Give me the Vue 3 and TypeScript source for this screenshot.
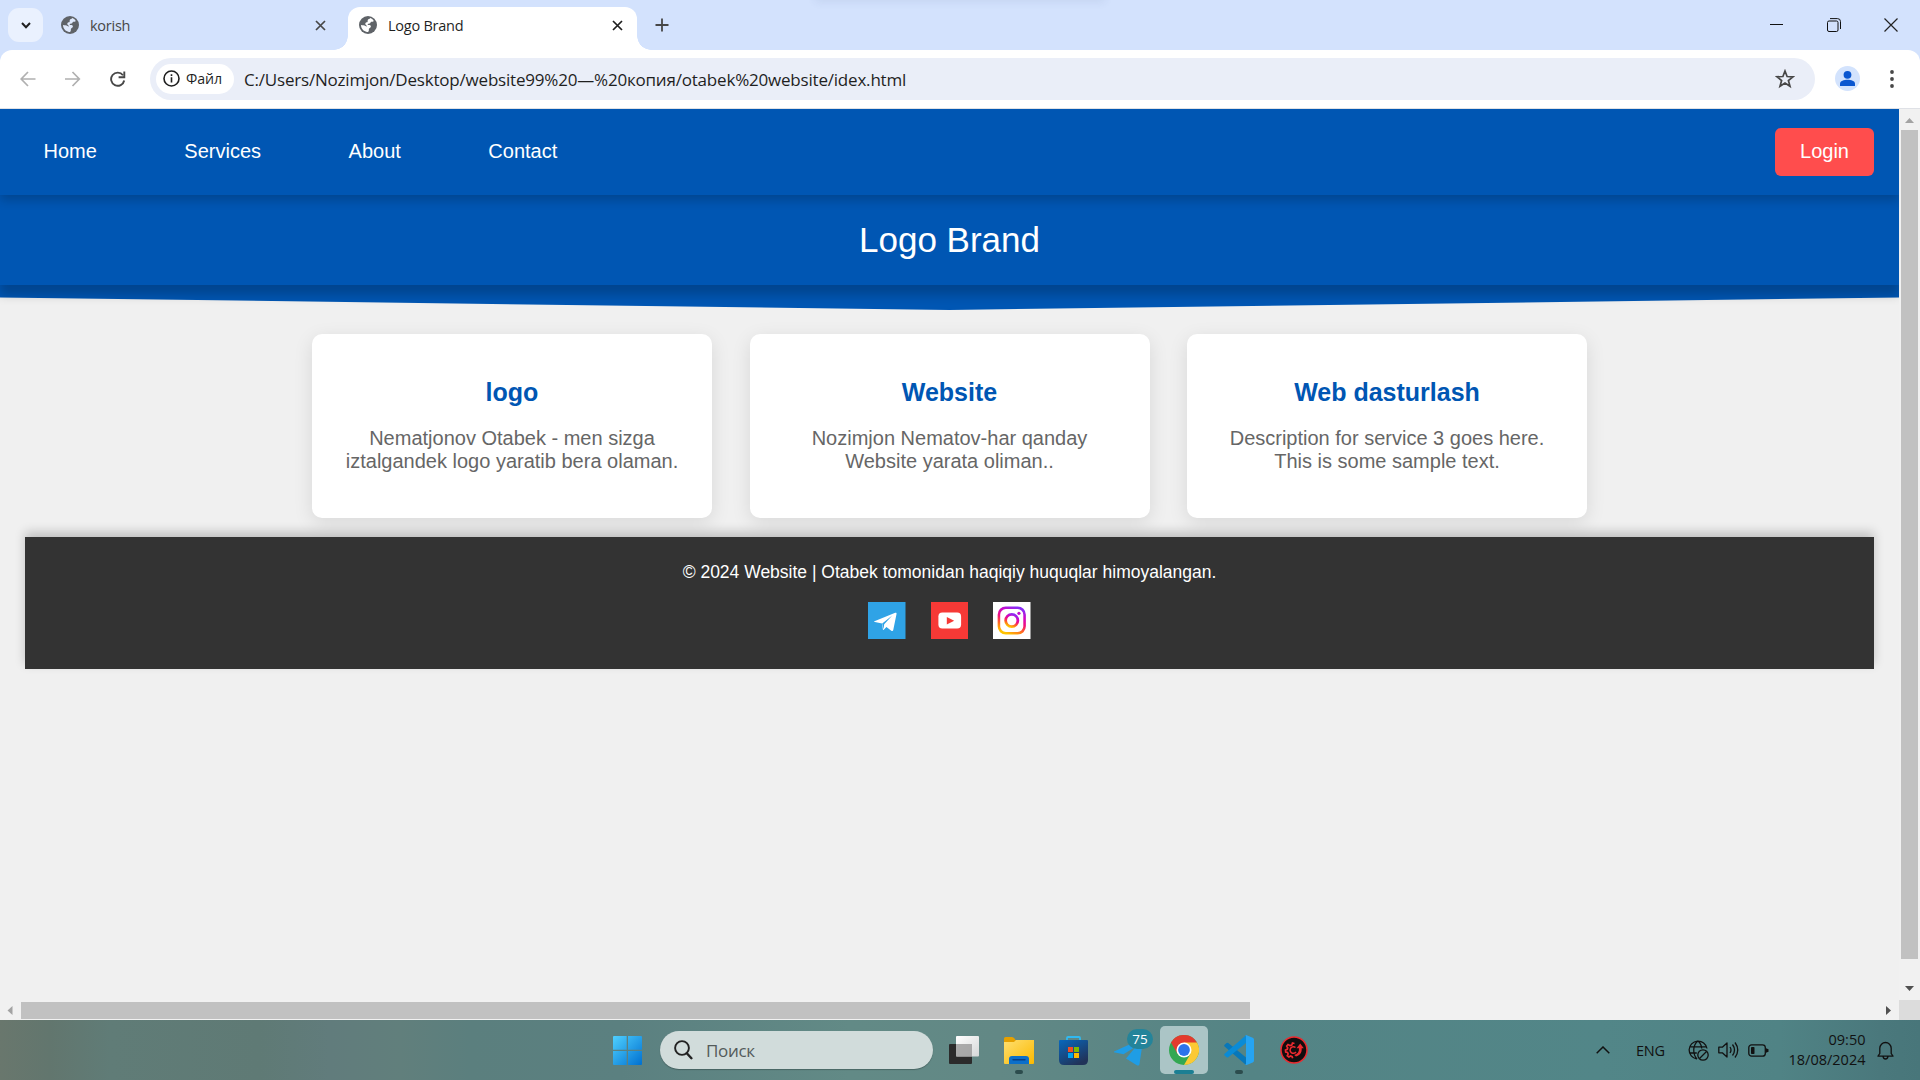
<script setup lang="ts">
interface Tab { title: string; active: boolean }
interface Card { title: string; lines: string[] }

const tabs: Tab[] = [
  { title: 'korish', active: false },
  { title: 'Logo Brand', active: true },
]
const links: string[] = ['Home', 'Services', 'About', 'Contact']
const cards: Card[] = [
  { title: 'logo', lines: ['Nematjonov Otabek - men sizga', 'iztalgandek logo yaratib bera olaman.'] },
  { title: 'Website', lines: ['Nozimjon Nematov-har qanday', 'Website yarata oliman..'] },
  { title: 'Web dasturlash', lines: ['Description for service 3 goes here.', 'This is some sample text.'] },
]
</script>

<template>
  <div class="screen">
    <div class="tabstrip">
      <button class="tab-search">
        <svg width="10" height="7" viewBox="0 0 10 7"><path d="M1 1l4 4.2L9 1" fill="none" stroke="#1f1f1f" stroke-width="2" /></svg>
      </button>
      <div v-for="tab in tabs" :key="tab.title" class="tab" :class="{ active: tab.active }">
        <svg class="globe" width="18" height="18" viewBox="0 0 18 18">
          <circle cx="9" cy="9" r="9" fill="#5f6368" />
          <path d="M11.200 2.100c1.500.5 2.800 1.500 3.600 2.800-.8.900-1.800.600-2.600.9-.7.300-.5 1.200-1.300 1.600-.8.300-1.600-.1-2.100.5-.4.600.2 1.100.9 1.100 1.200 0 2.200.4 2.200 1.500 0 1.200-1.500 1.400-1.900 2.300-.4 1 .2 1.800-.5 2.600-.4.500-1 .7-1.600.6C4.500 15.500 2 12.600 2 9.100c1.600.2 3.400.4 4.500 1 .5.300.9.600 1.300.3.300-.4-.5-.9-.9-1.300-.6-.7-.9-1.600-.2-2.300.6-.6 1.500-.4 1.900-1.100.3-.6-.2-1.200.3-1.900.5-.6 1.700-.6 2.300-1.700z" :fill="tab.active ? '#fff' : '#dfe9fc'" />
        </svg>
        <span class="tab-title">{{ tab.title }}</span>
        <svg class="tab-close" width="11" height="11" viewBox="0 0 11 11"><path d="M1 1l9 9M10 1l-9 9" :stroke="tab.active ? '#1f1f1f' : '#474747'" stroke-width="1.7" /></svg>
      </div>
      <svg class="new-tab" width="14" height="14" viewBox="0 0 14 14"><path d="M7 .5v13M.5 7h13" stroke="#474747" stroke-width="1.8" /></svg>
      <div class="top-shade"></div>
      <div class="window-buttons">
        <svg width="13" height="14" viewBox="0 0 13 14"><path d="M0 6.500h13" stroke="#111" stroke-width="1" /></svg>
        <svg width="14" height="14" viewBox="0 0 14 14"><rect x=".5" y="3" width="10.500" height="10.500" rx="1.500" fill="none" stroke="#111" /><path d="M3 .6h7.500q3 0 3 3V11" fill="none" stroke="#111" /></svg>
        <svg width="14" height="14" viewBox="0 0 14 14"><path d="M.5 .5l13 13M13.500 .5l-13 13" stroke="#222" stroke-width="1.200" /></svg>
      </div>
    </div>

    <div class="toolbar-back">
      <div class="toolbar">
        <svg class="tool" width="16" height="16" viewBox="0 0 16 16"><path d="M15.500 8H1.500M8 1L1.200 8 8 15" fill="none" stroke="#b0b0b0" stroke-width="1.700" /></svg>
        <svg class="tool" width="16" height="16" viewBox="0 0 16 16"><path d="M0 8h14M7.500 1l6.800 7-6.800 7" fill="none" stroke="#b0b0b0" stroke-width="1.700" /></svg>
        <svg class="tool" width="16" height="16" viewBox="0 0 16 16"><path d="M13 4.200A6.600 6.600 0 1 0 14.200 9.500" fill="none" stroke="#474747" stroke-width="1.900" /><path d="M14.300 .6v5.700H8.600" fill="none" stroke="#474747" stroke-width="1.900" /></svg>
        <div class="omnibox">
          <div class="chip">
            <svg width="17" height="17" viewBox="0 0 17 17"><circle cx="8.500" cy="8.500" r="7.500" fill="none" stroke="#1f1f1f" stroke-width="1.600" /><path d="M8.500 7.300v5.200M8.500 4.300v1.700" stroke="#1f1f1f" stroke-width="1.600" /></svg>
            <span>Файл</span>
          </div>
          <span class="url">C:/Users/Nozimjon/Desktop/website99%20—%20копия/otabek%20website/idex.html</span>
          <svg class="star" width="20" height="20" viewBox="0 0 20 20"><path d="M10 2l2.100 5.500 5.900.3-4.600 3.700 1.600 5.800L10 14l-5 3.300 1.600-5.800L2 7.800l5.900-.3z" fill="none" stroke="#474747" stroke-width="1.700" /></svg>
        </div>
        <svg class="profile" width="25" height="25" viewBox="0 0 25 25"><circle cx="12.500" cy="12.500" r="12.500" fill="#d3e3fd" /><circle cx="12.500" cy="8.800" r="3.900" fill="#0b57d0" /><path d="M5 20v-2.200c0-3 4-4 7.500-4s7.500 1 7.500 4V20z" fill="#0b57d0" /></svg>
        <svg class="dots" width="4" height="18" viewBox="0 0 4 18"><g fill="#474747"><circle cx="2" cy="2" r="1.900" /><circle cx="2" cy="9" r="1.900" /><circle cx="2" cy="16" r="1.900" /></g></svg>
      </div>
    </div>

    <div class="viewport">
      <div class="page">
        <nav class="nav">
          <div class="links"><a v-for="link in links" :key="link">{{ link }}</a></div>
          <button class="login">Login</button>
        </nav>
        <header class="brand">Logo Brand</header>
        <div class="wedge"></div>
        <main class="cards">
          <section v-for="card in cards" :key="card.title" class="card">
            <h2>{{ card.title }}</h2>
            <p><template v-for="(line, i) in card.lines" :key="line"><br v-if="i > 0">{{ line }}</template></p>
          </section>
        </main>
        <footer class="footer">
          <p>© 2024 Website | Otabek tomonidan haqiqiy huquqlar himoyalangan.</p>
          <div class="social">
            <svg viewBox="0 0 38 37" preserveAspectRatio="none"><rect width="38" height="37" fill="#2fa3e6" /><path d="M6.500 19.200L27.600 10.800c1-.3 1.500.2 1.300 1.300L25.600 28c-.3 1.200-1 1.300-2 .7l-4.900-3.700-2.800 2.700c-.4.300-.8.300-.8-.2l-.8-5.900L7 20.100c-.9-.2-.9-.6-.5-.9z" fill="#fff" /><path d="M14.400 21.600l10.200-8.100-8.200 8.800-.7 5z" fill="#2fa3e6" /></svg>
            <svg viewBox="0 0 38 37" preserveAspectRatio="none"><rect width="38" height="37" fill="#f63936" /><rect x="7.500" y="10.500" width="23" height="16" rx="4" fill="#fff" /><path d="M16 15v7.500l7.500-3.700z" fill="#f63936" /></svg>
            <svg viewBox="0 0 38 37" preserveAspectRatio="none">
              <defs>
                <linearGradient id="insta" x1=".3" y1="1" x2=".7" y2="0"><stop offset="0" stop-color="#ffc400" /><stop offset=".25" stop-color="#ff6a20" /><stop offset=".5" stop-color="#f0107c" /><stop offset=".75" stop-color="#cf06c4" /><stop offset="1" stop-color="#8a2cf5" /></linearGradient>
              </defs>
              <rect width="38" height="37" fill="#fff" />
              <rect x="6" y="5.700" width="26" height="25.600" rx="7" fill="none" stroke="url(#insta)" stroke-width="2.600" />
              <circle cx="19" cy="18.500" r="6.200" fill="none" stroke="url(#insta)" stroke-width="2.800" />
              <circle cx="26.300" cy="11.300" r="1.600" fill="#c509cf" />
            </svg>
          </div>
        </footer>
      </div>
      <div class="vbar">
        <svg width="21" height="21" viewBox="0 0 21 21"><path d="M6 14l4.500-5L15 14z" fill="#a3a3a3" /></svg>
        <div class="vthumb"></div>
        <svg class="vdown" width="21" height="21" viewBox="0 0 21 21"><path d="M6 7l4.500 5L15 7z" fill="#505050" /></svg>
      </div>
      <div class="hbar">
        <svg width="21" height="20" viewBox="0 0 21 20"><path d="M12.500 6l-5 4.500 5 4.500z" fill="#a3a3a3" /></svg>
        <div class="hthumb"></div>
        <svg class="hright" width="21" height="20" viewBox="0 0 21 20"><path d="M8 6l5 4.500L8 15z" fill="#505050" /></svg>
      </div>
      <div class="corner"></div>
    </div>

    <div class="taskbar">
      <svg class="start" width="29" height="29" viewBox="0 0 29 29">
        <defs><linearGradient id="win" x1="0" y1="0" x2="1" y2="1"><stop offset="0" stop-color="#4fd0ff" /><stop offset="1" stop-color="#0070d0" /></linearGradient></defs>
        <path d="M0 1q0-1 1-1h12.700v13.700H0zM15 0h13q1 0 1 1v12.700H15zM0 15h13.700v14H1q-1 0-1-1zM15 15h14v13q0 1-1 1H15z" fill="url(#win)" />
      </svg>
      <div class="search">
        <svg width="19" height="20" viewBox="0 0 19 20"><circle cx="8" cy="8" r="6.900" fill="none" stroke="#222" stroke-width="1.900" /><path d="M12.800 13.200l4.600 5" stroke="#222" stroke-width="2.400" stroke-linecap="round" /></svg>
        <span>Поиск</span>
      </div>
      <svg class="app taskview" width="30" height="28" viewBox="0 0 30 28">
        <defs><linearGradient id="tv" x1="0" y1="0" x2="1" y2="1"><stop offset="0" stop-color="#fff" /><stop offset="1" stop-color="#d5d8d8" /></linearGradient></defs>
        <rect y="8" width="23" height="20" rx="1" fill="#2b2b2b" /><rect x="7" width="23" height="20.500" rx="1" fill="url(#tv)" /><path d="M7 8h16v12.500H7z" fill="#999" opacity=".8" />
      </svg>
      <svg class="app folder" width="30" height="37" viewBox="0 0 30 37">
        <defs><linearGradient id="fold" x1="0" y1="0" x2="1" y2="1"><stop offset="0" stop-color="#ffdf70" /><stop offset="1" stop-color="#fbb900" /></linearGradient></defs>
        <path d="M0 1.500Q0 0 1.500 0H8q1.500 0 2.500 1.500l1 1.500H28.500q1.500 0 1.500 1.500V12H0z" fill="#e5a000" /><path d="M0 5h10l2-2h18v23q0 1-1 1H1q-1 0-1-1z" fill="url(#fold)" /><path d="M5 27v-5q0-3 3-3h14q3 0 3 3v5z" fill="#0c6fc9" /><path d="M9 22.800h12" stroke="#073f88" stroke-width="1.400" stroke-linecap="round" /><rect x="11" y="33" width="8" height="4" rx="2" fill="#2c4c4d" />
      </svg>
      <svg class="app store" width="29" height="29" viewBox="0 0 29 29">
        <defs><linearGradient id="store" x1="0" y1="0" x2=".6" y2="1"><stop offset="0" stop-color="#0868bd" /><stop offset="1" stop-color="#213359" /></linearGradient></defs>
        <path d="M8 5V2q0-1 1-1h11q1 0 1 1v3" fill="none" stroke="#30b9f0" stroke-width="1.800" /><path d="M0 5q0-1 1-1h27q1 0 1 1v19q0 5-5 5H5q-5 0-5-5z" fill="url(#store)" /><path d="M9 11h5v5H9z" fill="#f25022" /><path d="M15 11h5v5h-5z" fill="#7fba00" /><path d="M9 17h5v5H9z" fill="#00a4ef" /><path d="M15 17h5v5h-5z" fill="#ffb900" />
      </svg>
      <div class="app telegram">
        <svg width="30" height="28" viewBox="0 0 30 28"><path d="M0 12.500L27.500 0c1-.4 1.800.1 1.500 1.500L25.500 25c-.2 1.500-1.500 2-2.700 1.200L12 19.500 22 7.500 9.500 15.300 1 13.600q-1.500-.4-1-1.100z" fill="#1f9de5" /></svg>
        <span class="badge">75</span>
      </div>
      <div class="app chrome">
        <svg width="30" height="30" viewBox="0 0 30 30">
          <circle cx="15" cy="15" r="15" fill="#33a852" /><path d="M15 15L2 7.500A15 15 0 0 1 28 7.500z" fill="#e33b2e" /><path d="M2 7.500L8.500 18.800 15 15V7.500z" fill="#e33b2e" /><path d="M15 7.500h13A15 15 0 0 1 15 30L21.500 18.800 15 15z" fill="#fcc934" /><circle cx="15" cy="15" r="7.500" fill="#fff" /><circle cx="15" cy="15" r="5.900" fill="#2d73ea" />
        </svg>
        <i class="active-line"></i>
      </div>
      <svg class="app code" width="30" height="39" viewBox="0 0 30 39">
        <path d="M.6 9.800l2-1.800q.8-.6 1.700 0L22 22.500V30L.6 11.400q-.9-.8 0-1.600z" fill="#0877b9" /><path d="M.6 20.400l2 1.800q.8.600 1.700 0L22 8V.3L.6 18.800q-.9.800 0 1.600z" fill="#0a8bd6" /><path d="M21.500.3Q22 0 22.700.2l6 2.600q1.300.6 1.300 2v20.600q0 1.400-1.300 2l-6 2.500q-1 .3-1.700-.6.800.2 1-.9V2Q22 1 21.500.3z" fill="#26a4f2" /><rect x="11" y="35" width="8" height="4" rx="2" fill="#2c4c4d" />
      </svg>
      <svg class="app red" width="28" height="28" viewBox="0 0 28 28">
        <circle cx="14" cy="14" r="13" fill="#120d0e" stroke="#ee2a2f" stroke-width="1.500" />
        <path d="M14.500 7.500l-2-.5-.7 2-1.800.5-2-1-1.300 1.500 1 1.800-.4 1.500-1.800.7.200 2 1.800.5.600 1.500-.8 1.700 1.600 1.300 1.700-1 1.500.6.600 1.700" fill="none" stroke="#ee2a2f" stroke-width="1.700" />
        <path d="M15.500 11.500a3.300 3.300 0 1 0 .5 4.500" fill="none" stroke="#ee2a2f" stroke-width="1.500" />
        <path d="M20.200 7.500l3.600 4.800h-2.100c.3 4.200-1.600 7.200-5.700 8.200l-1.800-1.600c3.300-.6 5-2.700 4.800-6.600h-2.500z" fill="#ee2a2f" />
      </svg>
      <div class="tray">
        <svg class="chev" width="14" height="8" viewBox="0 0 14 8"><path d="M.7 7.200L7 1l6.300 6.200" fill="none" stroke="#111" stroke-width="1.500" /></svg>
        <span class="lang">ENG</span>
        <svg class="net" width="21" height="21" viewBox="0 0 21 21"><g fill="none" stroke="#111" stroke-width="1.300"><path d="M9 19A9 9 0 1 1 19 8.500M9 19C4.500 14 4.500 5 10 1c2.300 2 3.600 4.700 3.700 7.500M1.500 6.800h17M1.200 13h7.600" /><circle cx="15" cy="15" r="5.200" /><path d="M11.500 18.500l7-7" /></g></svg>
        <svg class="vol" width="21" height="18" viewBox="0 0 21 18"><g fill="none" stroke="#111" stroke-width="1.300"><path d="M.8 6.200h3.500L9 2v14l-4.700-4.200H.8z" stroke-linejoin="round" /><path d="M12 6q2 3 0 6M14.500 3.500q4 5.500 0 11M17 1.500q5.500 7.500 0 15" /></g></svg>
        <svg class="bat" width="21" height="13" viewBox="0 0 21 13"><rect x=".8" y=".8" width="16.500" height="11.400" rx="2.800" fill="none" stroke="#111" stroke-width="1.300" /><rect x="3" y="3" width="3.500" height="7" rx=".8" fill="#111" /><path d="M18 4.200l2.500 1v2.600l-2.500 1z" fill="#111" /></svg>
        <div class="clock"><span>09:50</span><span>18/08/2024</span></div>
        <svg class="bell" width="17" height="19" viewBox="0 0 17 19"><path d="M2.800 12.500V7.200a5.700 5.700 0 0 1 11.400 0v5.300l1.800 2.700H1zM6 15.500q.5 2.500 2.500 2.500t2.500-2.500" fill="none" stroke="#111" stroke-width="1.300" stroke-linejoin="round" /></svg>
      </div>
    </div>
  </div>
</template>

<style>
body { margin: 0; overflow: hidden; }
</style>

<style scoped>
.screen { width: 1920px; height: 1080px; display: flex; flex-direction: column; overflow: hidden; font-family: "Open Sans", "Noto Sans", sans-serif; color: #1f1f1f; }
.screen svg { display: block; flex: none; }
button { border: 0; padding: 0; font: inherit; }

.tabstrip { height: 50px; box-sizing: border-box; background: #d3e2fd; display: flex; align-items: center; position: relative; padding-left: 8px; flex: none; }
.tab-search { width: 35px; height: 34px; border-radius: 11px; background: #eaf1fe; display: flex; align-items: center; justify-content: center; }
.tab { width: 289px; height: 43px; margin-top: 7px; box-sizing: border-box; display: flex; align-items: center; padding: 0 14.5px 7px 11px; position: relative; }
.tab:first-of-type { margin-left: 7px; width: 290px; }
.tab-title { font-size: 14.5px; letter-spacing: -.25px; margin-left: 11px; flex: 1; line-height: 20px; padding-top: 1px; white-space: nowrap; color: #474747; }
.tab.active { background: #fff; border-radius: 12px 12px 0 0; margin-left: 8px; color: #1f1f1f; }
.tab.active .tab-title { color: #1f1f1f; }
.tab.active::before, .tab.active::after { content: ""; position: absolute; bottom: 0; width: 14px; height: 14px; }
.tab.active::before { left: -14px; background: radial-gradient(circle at 0 0, transparent 13.5px, #fff 14px); }
.tab.active::after { right: -14px; background: radial-gradient(circle at 100% 0, transparent 13.5px, #fff 14px); }
.new-tab { margin-left: 18px; }
.top-shade { position: absolute; left: 815px; top: -10px; width: 290px; height: 10px; box-shadow: 0 2px 8px rgba(60, 80, 120, .09); }
.window-buttons { margin-left: auto; display: flex; gap: 43.5px; margin-right: 22px; }

.toolbar-back { background: #d3e2fd; flex: none; }
.toolbar { height: 59px; box-sizing: border-box; background: #fff; border-bottom: 1px solid #dfe1e6; border-radius: 12px 12px 0 0; display: flex; align-items: center; padding: 0 26px 1px 20px; }
.tool { margin-right: 29px; }
.omnibox { width: 1665px; height: 42px; margin-left: -5px; border-radius: 21px; background: #eaeef8; display: flex; align-items: center; box-sizing: border-box; padding: 0 20px 0 6px; }
.chip { width: 78px; height: 30px; border-radius: 15px; background: #fff; display: flex; align-items: center; box-sizing: border-box; padding-left: 7px; gap: 6px; font-size: 14.2px; letter-spacing: -.1px; }
.url { margin-left: 10px; font-size: 17px; white-space: nowrap; letter-spacing: -.2px; padding-top: 1px; flex: 1; }
.profile { margin-left: 20px; }
.dots { margin-left: 30.5px; }

.viewport { flex: none; height: 911px; display: grid; grid-template-columns: 1899px 21px; grid-template-rows: 891px 20px; background: #f0f0f0; }
.page { overflow: hidden; background: #f0f0f0; font-family: "Liberation Sans", Arial, sans-serif; }
.nav { height: 86px; box-sizing: border-box; background: #0056b3; display: flex; align-items: center; justify-content: space-between; padding: 0 25px 0 43.5px; box-shadow: 0 5px 10px rgba(0, 0, 0, .2); position: relative; z-index: 3; color: #fff; font-size: 20px; }
.links { display: flex; gap: 87.5px; padding-bottom: 2px; }
.login { width: 99px; height: 48px; border-radius: 6px; background: #ff4d4d; color: #fff; font-size: 20px; padding-bottom: 2px; }
.brand { height: 90px; background: #0056b3; color: #fff; font-size: 35px; line-height: 90px; text-align: center; box-shadow: 0 10px 10px rgba(0, 0, 0, .2); position: relative; z-index: 2; }
.wedge { height: 25px; background: #0056b3; clip-path: polygon(0 0, 100% 0, 100% 50%, 50% 100%, 0 50%); }
.cards { display: flex; justify-content: center; gap: 37.5px; padding: 24px 0 19px; }
.card { width: 400px; height: 184px; box-sizing: border-box; border-radius: 10px; background: #fff; box-shadow: 0 5px 19px rgba(0, 0, 0, .1); text-align: center; padding-top: 43px; }
.card h2 { margin: 0; font-size: 25px; line-height: 30px; color: #0056b3; }
.card p { margin: 20px 0 0; font-size: 20px; line-height: 23px; color: #666; }
.footer { margin: 0 25px; height: 132px; box-sizing: border-box; background: #333; box-shadow: 0 -5px 10px rgba(0, 0, 0, .2); text-align: center; color: #fff; padding-top: 24px; position: relative; }
.footer p { margin: 0; font-size: 17.5px; line-height: 22px; }
.social { display: flex; justify-content: center; gap: 25px; margin-top: 19px; }
.social svg { width: 37.500px; height: 37px; }

.vbar { background: #f1f1f1; display: flex; flex-direction: column; }
.vthumb { width: 17px; height: 829px; margin-left: 2px; background: #c1c1c1; }
.vdown { margin-top: auto; }
.hbar { background: #f1f1f1; display: flex; align-items: center; }
.hthumb { width: 1229px; height: 17px; margin-top: 1px; background: #c1c1c1; }
.hright { margin-left: auto; }
.corner { background: #dcdcdc; }

.taskbar { height: 60px; flex: none; display: flex; align-items: center; background: linear-gradient(90deg, #69776d 0, #62766e 50px, #607c77 110px, #5f7a75 260px, #617c7c 330px, #617f7c 400px, #5b7f7e 470px, #5b8080 620px, #628a86 850px, #628885 1000px, #548485 1250px, #528688 1600px, #508385 1780px, #4a787c 1880px, #48767a 1920px); padding-left: 613px; }
.start { margin-top: 1px; }
.search { width: 273px; height: 38px; border-radius: 19px; margin-left: 18px; background: #d1dcdb; display: flex; align-items: center; box-sizing: border-box; padding-left: 14px; font-size: 17px; color: #535a5a; box-shadow: 0 1px 1px rgba(0, 0, 0, .25); }
.search span { margin-left: 13px; line-height: 24px; padding-top: 1px; letter-spacing: -.3px; }
.taskview { margin-left: 16px; }
.folder { margin-left: 25px; margin-top: 11px; }
.store { margin-left: 25px; margin-top: 1px; }
.telegram { margin-left: 26px; width: 46px; position: relative; }
.telegram svg { margin-top: 6px; }
.badge { position: absolute; left: 13px; top: -4px; width: 26px; height: 20px; border-radius: 10px; background: #24849a; color: #fff; font-size: 13.500px; line-height: 20px; text-align: center; }
.chrome { width: 48px; height: 48px; border-radius: 5px; background: #abc5c6; display: flex; align-items: center; justify-content: center; position: relative; }
.active-line { position: absolute; left: 14px; bottom: 0; width: 20px; height: 4px; border-radius: 2px; background: #1b7f93; }
.code { margin-left: 16px; margin-top: 9px; }
.red { margin-left: 25.5px; }
.tray { margin-left: auto; display: flex; align-items: center; padding-right: 26.5px; color: #111; }
.lang { width: 29px; font-size: 14.5px; margin-left: 26px; letter-spacing: -.2px; }
.net { margin-left: 22.5px; }
.vol { margin-left: 9px; }
.bat { margin-left: 9px; }
.clock { width: 88px; margin-left: 9px; display: flex; flex-direction: column; align-items: flex-end; font-size: 14.5px; line-height: 20px; letter-spacing: 0; }
.bell { margin-left: 11px; }
</style>
